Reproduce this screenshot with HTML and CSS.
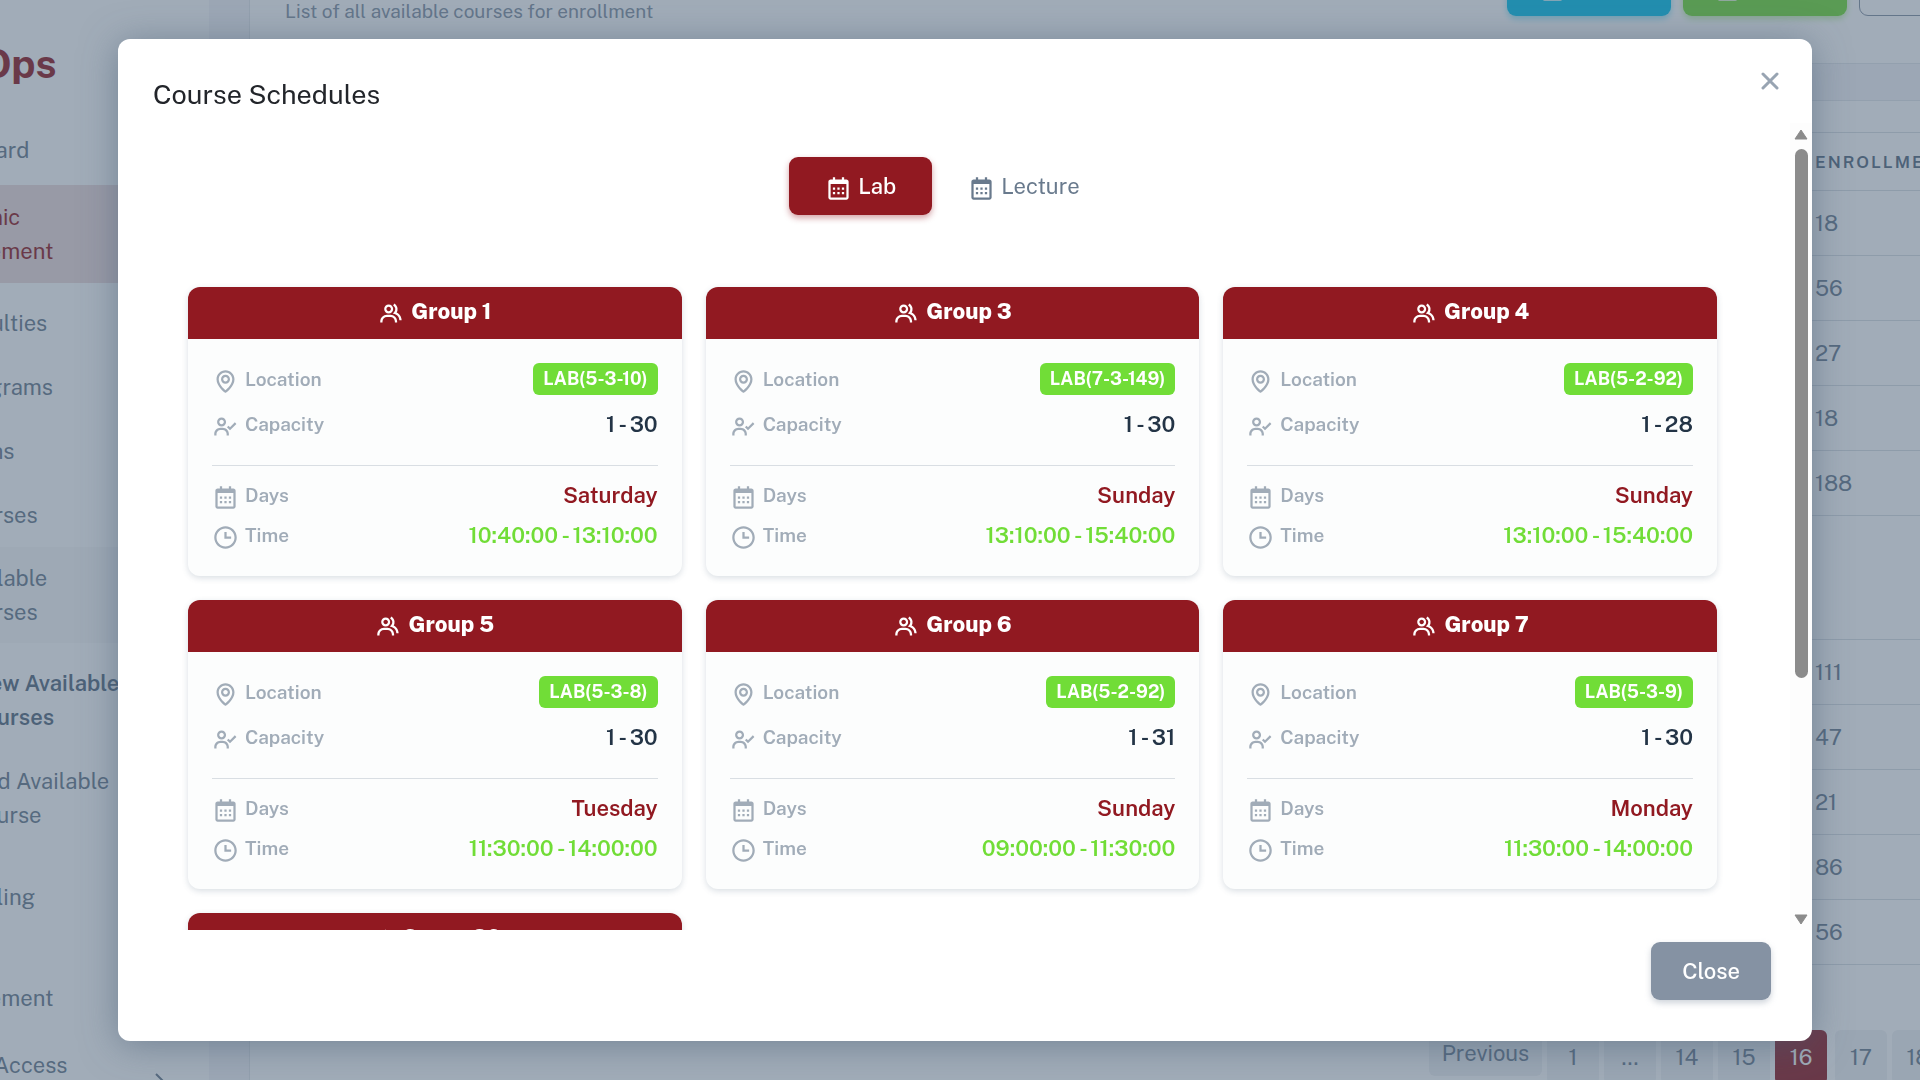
FILE: index.html
```html
<!DOCTYPE html>
<html lang="en">
<head>
<meta charset="UTF-8">
<meta name="viewport" content="width=device-width, initial-scale=1.0">
<title>Course Schedules</title>
<link rel="stylesheet" href="styles.css">
</head>
<body>
  <svg class="sprite" aria-hidden="true">
    <symbol id="i-calendar" viewBox="0 0 24 24">
      <path d="M7 11h2v2H7zm0 4h2v2H7zm4-4h2v2h-2zm0 4h2v2h-2zm4-4h2v2h-2zm0 4h2v2h-2z"/>
      <path d="M5 22h14c1.103 0 2-.897 2-2V6c0-1.103-.897-2-2-2h-2V2h-2v2H9V2H7v2H5c-1.103 0-2 .897-2 2v14c0 1.103.897 2 2 2zM19 8l.001 12H5V8h14z"/>
    </symbol>
    <symbol id="i-time" viewBox="0 0 24 24">
      <path d="M12 2C6.486 2 2 6.486 2 12s4.486 10 10 10 10-4.486 10-10S17.514 2 12 2zm0 18c-4.411 0-8-3.589-8-8s3.589-8 8-8 8 3.589 8 8-3.589 8-8 8z"/>
      <path d="M13 7h-2v6h6v-2h-4z"/>
    </symbol>
    <symbol id="i-map" viewBox="0 0 24 24">
      <path d="M12 14c2.206 0 4-1.794 4-4s-1.794-4-4-4-4 1.794-4 4 1.794 4 4 4zm0-6c1.103 0 2 .897 2 2s-.897 2-2 2-2-.897-2-2 .897-2 2-2z"/>
      <path d="M11.42 21.814a.998.998 0 0 0 1.16 0C12.884 21.599 20.029 16.44 20 10c0-4.411-3.589-8-8-8S4 5.589 4 9.995c-.029 6.445 7.116 11.604 7.42 11.819zM12 4c3.309 0 6 2.691 6 6.005.021 4.438-4.388 8.423-6 9.73-1.611-1.308-6.021-5.294-6-9.735 0-3.309 2.691-6 6-6z"/>
    </symbol>
    <symbol id="i-user-check" viewBox="0 0 24 24">
      <path d="M8.5 12c2.206 0 4-1.794 4-4s-1.794-4-4-4-4 1.794-4 4 1.794 4 4 4zm0-6c1.103 0 2 .897 2 2s-.897 2-2 2-2-.897-2-2 .897-2 2-2zm1 7h-2C4.467 13 2 15.467 2 18.500V20h2v-1.500C4 16.570 5.570 15 7.500 15h2c1.930 0 3.500 1.570 3.500 3.500V20h2v-1.500c0-3.033-2.467-5.500-5.500-5.500z"/>
      <path d="M20.293 8.293 16 12.586l-1.293-1.293-1.414 1.414L16 15.414l5.707-5.707z"/>
    </symbol>
    <symbol id="i-group" viewBox="0 0 24 24">
      <path d="M16.604 11.048a5.67 5.67 0 0 0 .751-3.44c-.179-1.784-1.175-3.361-2.803-4.44l-1.105 1.666c1.119.742 1.8 1.799 1.918 2.974a3.693 3.693 0 0 1-1.072 2.986l-1.192 1.192 1.618.475C18.951 13.701 19 17.957 19 18h2c0-1.789-.956-5.285-4.396-6.952z"/>
      <path d="M9.500 12c2.206 0 4-1.794 4-4s-1.794-4-4-4-4 1.794-4 4 1.794 4 4 4zm0-6c1.103 0 2 .897 2 2s-.897 2-2 2-2-.897-2-2 .897-2 2-2zm1.500 7H8c-3.309 0-6 2.691-6 6v1h2v-1c0-2.206 1.794-4 4-4h3c2.206 0 4 1.794 4 4v1h2v-1c0-3.309-2.691-6-6-6z"/>
    </symbol>
  </svg>

  <div class="app">
    <aside class="sidebar">
      <div class="brand">UniOps</div>
      <nav class="menu">
        <a href="#" class="menu-item">Dashboard</a>
        <a href="#" class="menu-item active">Academic<br>Management</a>
        <div class="submenu">
          <a href="#" class="menu-item">Faculties</a>
          <a href="#" class="menu-item">Programs</a>
          <a href="#" class="menu-item">Loans</a>
          <a href="#" class="menu-item">Courses</a>
          <a href="#" class="menu-item open">Available<br>Courses</a>
          <div class="leaves">
            <a href="#" class="menu-item current">View Available<br>Courses</a>
            <a href="#" class="menu-item">Add Available<br>Course</a>
          </div>
        </div>
        <a href="#" class="menu-item">Scheduling</a>
        <a href="#" class="menu-item">User<br>Management</a>
        <a href="#" class="menu-item">Report Access<br>Management
          <svg class="chevron" viewBox="0 0 10 18" aria-hidden="true"><path d="m1 1 8 8-8 8"/></svg>
        </a>
      </nav>
    </aside>

    <main class="content">
      <section class="card page-head">
        <div class="page-title">
          <h1>Available Courses</h1>
          <p>List of all available courses for enrollment</p>
        </div>
        <div class="page-actions">
          <button class="btn btn-info"><svg class="icon"><use href="#i-calendar"/></svg> Import</button>
          <button class="btn btn-success"><svg class="icon"><use href="#i-calendar"/></svg> Export</button>
          <button class="btn btn-outline">Search</button>
        </div>
      </section>

      <section class="card table-card">
        <table>
          <thead>
            <tr><th>Course</th><th class="col-enroll">Enrollment</th></tr>
          </thead>
          <tbody>
            <tr><td></td><td>18</td></tr>
            <tr><td></td><td>56</td></tr>
            <tr><td></td><td>27</td></tr>
            <tr><td></td><td>18</td></tr>
            <tr><td></td><td>188</td></tr>
            <tr class="tall"><td></td><td></td></tr>
            <tr><td></td><td>111</td></tr>
            <tr><td></td><td>47</td></tr>
            <tr><td></td><td>21</td></tr>
            <tr><td></td><td>86</td></tr>
            <tr><td></td><td>56</td></tr>
          </tbody>
        </table>
        <nav class="pagination" aria-label="Pages">
          <a href="#" class="prev">Previous</a>
          <a href="#">1</a>
          <a href="#">...</a>
          <a href="#">14</a>
          <a href="#">15</a>
          <a href="#" class="current">16</a>
          <a href="#">17</a>
          <a href="#">18</a>
          <a href="#">19</a>
        </nav>
      </section>
    </main>
  </div>

  <div class="backdrop">
    <div class="modal" role="dialog" aria-modal="true" aria-labelledby="modalTitle">
      <header class="modal-header">
        <h2 id="modalTitle">Course Schedules</h2>
        <button class="btn-x" aria-label="Close dialog">
          <svg viewBox="0 0 18 18"><path d="m2 2 14 14M16 2 2 16"/></svg>
        </button>
      </header>

      <div class="modal-body">
        <div class="scroll-area">
          <div class="tabs" role="tablist">
            <button class="tab active" role="tab" aria-selected="true"><svg class="icon"><use href="#i-calendar"/></svg>Lab</button>
            <button class="tab" role="tab" aria-selected="false"><svg class="icon"><use href="#i-calendar"/></svg>Lecture</button>
          </div>

          <div class="groups">
            <article class="group">
              <h3><svg class="icon"><use href="#i-group"/></svg>Group 1</h3>
              <dl>
                <div class="row"><dt><svg class="icon"><use href="#i-map"/></svg>Location</dt><dd class="badge">LAB(5-3-10)</dd></div>
                <div class="row"><dt><svg class="icon"><use href="#i-user-check"/></svg>Capacity</dt><dd>1 - 30</dd></div>
              </dl>
              <dl class="when">
                <div class="row"><dt><svg class="icon"><use href="#i-calendar"/></svg>Days</dt><dd class="day">Saturday</dd></div>
                <div class="row"><dt><svg class="icon"><use href="#i-time"/></svg>Time</dt><dd class="time">10:40:00 - 13:10:00</dd></div>
              </dl>
            </article>

            <article class="group">
              <h3><svg class="icon"><use href="#i-group"/></svg>Group 3</h3>
              <dl>
                <div class="row"><dt><svg class="icon"><use href="#i-map"/></svg>Location</dt><dd class="badge">LAB(7-3-149)</dd></div>
                <div class="row"><dt><svg class="icon"><use href="#i-user-check"/></svg>Capacity</dt><dd>1 - 30</dd></div>
              </dl>
              <dl class="when">
                <div class="row"><dt><svg class="icon"><use href="#i-calendar"/></svg>Days</dt><dd class="day">Sunday</dd></div>
                <div class="row"><dt><svg class="icon"><use href="#i-time"/></svg>Time</dt><dd class="time">13:10:00 - 15:40:00</dd></div>
              </dl>
            </article>

            <article class="group">
              <h3><svg class="icon"><use href="#i-group"/></svg>Group 4</h3>
              <dl>
                <div class="row"><dt><svg class="icon"><use href="#i-map"/></svg>Location</dt><dd class="badge">LAB(5-2-92)</dd></div>
                <div class="row"><dt><svg class="icon"><use href="#i-user-check"/></svg>Capacity</dt><dd>1 - 28</dd></div>
              </dl>
              <dl class="when">
                <div class="row"><dt><svg class="icon"><use href="#i-calendar"/></svg>Days</dt><dd class="day">Sunday</dd></div>
                <div class="row"><dt><svg class="icon"><use href="#i-time"/></svg>Time</dt><dd class="time">13:10:00 - 15:40:00</dd></div>
              </dl>
            </article>

            <article class="group">
              <h3><svg class="icon"><use href="#i-group"/></svg>Group 5</h3>
              <dl>
                <div class="row"><dt><svg class="icon"><use href="#i-map"/></svg>Location</dt><dd class="badge">LAB(5-3-8)</dd></div>
                <div class="row"><dt><svg class="icon"><use href="#i-user-check"/></svg>Capacity</dt><dd>1 - 30</dd></div>
              </dl>
              <dl class="when">
                <div class="row"><dt><svg class="icon"><use href="#i-calendar"/></svg>Days</dt><dd class="day">Tuesday</dd></div>
                <div class="row"><dt><svg class="icon"><use href="#i-time"/></svg>Time</dt><dd class="time">11:30:00 - 14:00:00</dd></div>
              </dl>
            </article>

            <article class="group">
              <h3><svg class="icon"><use href="#i-group"/></svg>Group 6</h3>
              <dl>
                <div class="row"><dt><svg class="icon"><use href="#i-map"/></svg>Location</dt><dd class="badge">LAB(5-2-92)</dd></div>
                <div class="row"><dt><svg class="icon"><use href="#i-user-check"/></svg>Capacity</dt><dd>1 - 31</dd></div>
              </dl>
              <dl class="when">
                <div class="row"><dt><svg class="icon"><use href="#i-calendar"/></svg>Days</dt><dd class="day">Sunday</dd></div>
                <div class="row"><dt><svg class="icon"><use href="#i-time"/></svg>Time</dt><dd class="time">09:00:00 - 11:30:00</dd></div>
              </dl>
            </article>

            <article class="group">
              <h3><svg class="icon"><use href="#i-group"/></svg>Group 7</h3>
              <dl>
                <div class="row"><dt><svg class="icon"><use href="#i-map"/></svg>Location</dt><dd class="badge">LAB(5-3-9)</dd></div>
                <div class="row"><dt><svg class="icon"><use href="#i-user-check"/></svg>Capacity</dt><dd>1 - 30</dd></div>
              </dl>
              <dl class="when">
                <div class="row"><dt><svg class="icon"><use href="#i-calendar"/></svg>Days</dt><dd class="day">Monday</dd></div>
                <div class="row"><dt><svg class="icon"><use href="#i-time"/></svg>Time</dt><dd class="time">11:30:00 - 14:00:00</dd></div>
              </dl>
            </article>

            <article class="group">
              <h3><svg class="icon"><use href="#i-group"/></svg>Group 20</h3>
            </article>
          </div>
        </div>

        <div class="scrollbar" aria-hidden="true">
          <svg viewBox="0 0 14 11"><path d="M7 1 13 10H1z"/></svg>
          <div class="track"><div class="thumb"></div></div>
          <svg viewBox="0 0 14 11"><path d="M1 1h12L7 10z"/></svg>
        </div>
      </div>

      <footer class="modal-footer">
        <button class="btn btn-secondary">Close</button>
      </footer>
    </div>
  </div>
</body>
</html>
```

FILE: styles.css
```css
* {
  box-sizing: border-box;
}
body {
  margin: 0;
  height: 100vh;
  overflow: hidden;
  background: #f5f5f9;
  color: #697a8d;
  font-family: "Public Sans", Inter, "Liberation Sans", sans-serif;
  font-size: 22px;
  line-height: 34px;
}
h1, h2, h3, p, dl, dd {
  margin: 0;
}
a {
  color: inherit;
  text-decoration: none;
}
button {
  border: 0;
  font: inherit;
  cursor: pointer;
}
.sprite {
  display: none;
}
.icon {
  width: 27px;
  height: 27px;
  fill: currentColor;
  vertical-align: middle;
}

/* page behind the dialog */
.app {
  display: flex;
  width: calc(100vw + 270px);
  margin-left: -90px;
  height: 100vh;
}
.sidebar {
  width: 299px;
  flex: none;
  background: #fff;
}
.brand {
  padding: 42px 0 0 8px;
  height: 118px;
  color: #911921;
  font-size: 40px;
  font-weight: 700;
  line-height: 44px;
}
.menu {
  display: flex;
  flex-direction: column;
  gap: 3px;
}
.menu-item {
  display: flex;
  align-items: center;
  padding: 15px 44px 15px 9px;
  min-height: 64px;
}
.submenu {
  padding: 5px 0 9px;
}
.submenu .menu-item {
  padding: 14px 24px 14px 44px;
}
.leaves {
  display: flex;
  flex-direction: column;
  gap: 2px;
  padding: 9px 0 7px;
}
.leaves .menu-item {
  padding-left: 59px;
}
.menu-item.active {
  background: rgba(144, 23, 33, 0.16);
  color: #911921;
}
.menu-item.open {
  background: rgba(67, 89, 113, 0.04);
}
.menu-item.current {
  color: #566a7f;
  font-weight: 600;
}
.chevron {
  width: 10px;
  margin-left: auto;
  fill: none;
  stroke: currentColor;
  stroke-width: 2;
}
.content {
  flex: 1;
  margin-top: -78px;
  padding: 0 40px;
}
.card {
  background: #fff;
  border: 1px solid #e3e6ea;
  border-radius: 12px;
}
.page-head {
  display: flex;
  justify-content: space-between;
  padding: 35px 36px 35px 35px;
  margin-bottom: 36px;
}
.page-title {
  color: #8592a3;
  font-size: 19px;
}
.page-title h1 {
  font-size: 27px;
  line-height: 36px;
}
.page-actions {
  display: flex;
  align-items: flex-start;
  gap: 12px;
}
.btn {
  height: 58px;
  padding: 0 30px;
  border-radius: 9px;
  color: #fff;
  font-weight: 500;
}
.page-actions .btn {
  width: 164px;
}
.btn-info {
  background: #03c3ec;
  box-shadow: 0 3px 6px rgba(3, 195, 236, 0.4);
}
.btn-success {
  background: #71dd37;
  box-shadow: 0 3px 6px rgba(113, 221, 55, 0.4);
}
.btn-outline {
  background: none;
  border: 1px solid #8592a3;
  color: #8592a3;
}
.btn-secondary {
  padding: 0 31px;
  background: #8592a3;
  box-shadow: 0 3px 6px rgba(133, 146, 163, 0.4);
}
.table-card {
  padding-top: 31px;
}
table {
  width: 100%;
  table-layout: fixed;
  border-collapse: collapse;
}
th, td {
  height: 65px;
  padding: 0 20px 0 0;
  border-bottom: 1px solid #d9dee3;
  text-align: left;
}
th {
  height: 58px;
  border-top: 1px solid #d9dee3;
  color: #566a7f;
  font-size: 17px;
  font-weight: 600;
  letter-spacing: 2px;
  text-transform: uppercase;
}
.col-enroll {
  width: 244px;
}
.tall td {
  height: 124px;
}
.pagination {
  display: flex;
  justify-content: flex-end;
  align-items: flex-start;
  gap: 5px;
  padding: 65px 58px 40px 0;
}
.pagination a {
  width: 52px;
  border-radius: 6px;
  background: #f0f2f4;
  line-height: 54px;
  text-align: center;
}
.pagination .prev {
  width: 113px;
  line-height: 46px;
}
.pagination .current {
  margin: 0 3px 0 0;
  background: #911921;
  color: #fff;
}

/* dialog */
.backdrop {
  position: fixed;
  inset: 0;
  display: flex;
  padding: 39px 108px 39px 118px;
  background: rgba(67, 89, 113, 0.5);
}
.modal {
  flex: 1;
  display: flex;
  flex-direction: column;
  background: #fff;
  border-radius: 12px;
  box-shadow: 0 4px 36px rgba(67, 89, 113, 0.5);
}
.modal-header {
  display: flex;
  justify-content: space-between;
  align-items: flex-start;
  padding: 29px 31px 0 35px;
  height: 84px;
}
.modal-header h2 {
  padding-top: 9px;
  color: #22252a;
  font-size: 27px;
  font-weight: 400;
}
.btn-x {
  padding: 4px 2px;
  background: none;
  line-height: 0;
}
.btn-x svg {
  width: 18px;
  fill: none;
  stroke: #98a4b2;
  stroke-width: 3;
  stroke-linecap: round;
}
.modal-body {
  flex: 1;
  min-height: 0;
  display: flex;
}
.scroll-area {
  flex: 1;
  overflow: hidden;
  padding: 34px 73px 0 70px;
}
.scrollbar {
  display: flex;
  flex-direction: column;
  align-items: center;
  gap: 9px;
  width: 22px;
  padding: 6px 0 5px;
  background: #fdfdfd;
}
.scrollbar svg {
  width: 14px;
  fill: #8b8b8b;
  stroke: #8b8b8b;
  stroke-linejoin: round;
}
.track {
  flex: 1;
}
.thumb {
  width: 13px;
  height: 70%;
  border-radius: 7px;
  background: #8b8b8b;
}
.tabs {
  display: flex;
  justify-content: center;
  margin-bottom: 72px;
}
.tab {
  height: 58px;
  padding: 0 36px;
  border-radius: 9px;
  background: none;
  color: #697a8d;
}
.tab .icon {
  margin-right: 6px;
}
.tab.active {
  background: #911921;
  box-shadow: 0 3px 6px rgba(144, 23, 33, 0.4);
  color: #fff;
  font-weight: 500;
}
.groups {
  display: grid;
  grid-template-columns: repeat(3, 1fr);
  gap: 24px;
}
.group {
  border-radius: 12px;
  background: #fcfdfd;
  box-shadow: 0 2px 6px rgba(67, 89, 113, 0.2);
}
.group h3 {
  padding: 7px 0 11px;
  border-radius: 12px 12px 0 0;
  background: #911921;
  color: #fff;
  font-size: 22px;
  font-weight: 800;
  text-align: center;
}
.group h3 .icon {
  margin-right: 6px;
}
.group dl {
  display: flex;
  flex-direction: column;
  gap: 12px;
  margin: 0 24px;
  padding: 24px 0;
}
.group .when {
  gap: 6px;
  padding: 12px 0 24px;
  border-top: 1px solid #d9dee3;
}
.row {
  display: flex;
  justify-content: space-between;
  align-items: center;
}
.row dt {
  color: #a1acb8;
  font-size: 19px;
  font-weight: 600;
  line-height: 32px;
}
.row dt .icon {
  margin-right: 6px;
}
.row dd {
  color: #233446;
  font-weight: 600;
}
.row .badge {
  padding: 0 10px;
  border-radius: 6px;
  background: #71dd37;
  color: #fff;
  font-size: 18px;
  font-weight: 700;
  line-height: 32px;
}
.row .day {
  color: #911921;
}
.row .time {
  color: #71dd37;
}
.modal-footer {
  display: flex;
  justify-content: flex-end;
  padding: 12px 41px 41px;
}
```
